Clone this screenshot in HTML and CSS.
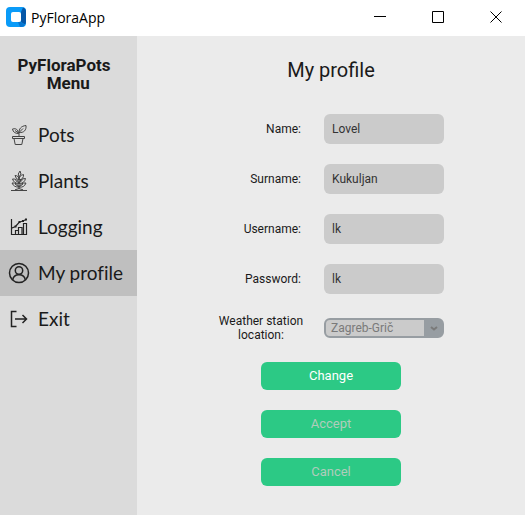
FILE: index.html
```html
<!DOCTYPE html>
<html lang="en">
<head>
<meta charset="utf-8">
<title>PyFloraApp</title>
<link rel="stylesheet" href="styles.css">
</head>
<body>
<header class="titlebar">
  <svg class="logo" width="20" height="20" viewBox="0 0 20 20" aria-hidden="true">
    <rect width="20" height="20" rx="4" fill="#0a9bf8"/>
    <path d="M15 5l2-4.500q3 1 3 4v10q0 2-1 3l-4-2.500z" fill="#0657a8"/>
    <path d="M15 15l4 3q-1 2-4 2h-1l-2-5z" fill="#0876d0"/>
    <rect x="5" y="5" width="10" height="10" rx="2" fill="#fff"/>
  </svg>
  <span class="app-name">PyFloraApp</span>
  <div class="window-controls">
    <button type="button" aria-label="Minimize"><svg width="12" height="12" viewBox="0 0 12 12"><path d="M0 5.500h12"/></svg></button>
    <button type="button" aria-label="Maximize"><svg width="12" height="12" viewBox="0 0 12 12"><path d="M.5.5h11v11H.5z"/></svg></button>
    <button type="button" aria-label="Close"><svg width="12" height="12" viewBox="0 0 12 12"><path d="M.5.5l11 11M11.5.5l-11 11"/></svg></button>
  </div>
</header>
<div class="layout">
  <aside class="sidebar">
    <h2 class="menu-title">PyFloraPots
  Menu</h2>
    <nav class="menu">
      <a class="menu-item" href="#pots">
        <svg class="icon icon-soft" viewBox="0 0 22 22" aria-hidden="true"><path d="M4.500 12.500h12v2h-12zM6 14.500l1.200 6h6.600l1.200-6M11 12.500V8.500M10.500 9.500C7 9.500 5 8 4.500 5 8 4 10 5.500 10.500 9.500zM11 8.500C11 5 13 2 18 1.500 18.500 6 16 9 11 8.500zM11 8.500l4-4M10.500 9L7 6.500"/></svg>
        <span>Pots</span></a>
      <a class="menu-item" href="#plants">
        <svg class="icon icon-soft" viewBox="0 0 22 22" aria-hidden="true"><path d="M3 20.500h16M7 19.800q4-2.500 8 0M11 19V7M11 7q-2-3 1-6 2.500 3-1 6zM11 10Q8 9.500 7 5.500q4 0 4 4.500zM11 10q0-4.500 4.500-5.500.5 4.500-4.500 5.500zM11 13.500q-5 0-6.500-4.500 5-.5 6.500 4.500zM11 13.500q1-5 6.500-5-1 5-6.500 5zM11 17q-5 .5-7-4 5-.5 7 4zM11 17q2-4.500 7-4-2 5-7 4zM11 17l-4-3M11 17l4-3M11 13l-3.500-2.500M11 13l3.500-3"/></svg>
        <span>Plants</span></a>
      <a class="menu-item" href="#logging">
        <svg class="icon" viewBox="0 0 22 22" aria-hidden="true"><path d="M3.500 3v15.500h15V7.500h-3v11M7.500 18.500v-4h3v4M10.500 18.500v-7h3.500v7M4 12l3.500-1.500L11.500 6 15 5l3-1.500"/><path class="dot" d="M6.500 9.500h2v2h-2zM10.500 5h2v2h-2zM14 4h2v2h-2zM17 2.500h2v2h-2z"/></svg>
        <span>Logging</span></a>
      <a class="menu-item active" href="#profile" aria-current="page">
        <svg class="icon icon-bold" viewBox="0 0 22 22" aria-hidden="true"><circle cx="11" cy="11" r="9.500"/><circle cx="11" cy="8.500" r="3.700"/><path d="M4.700 18c.5-3.500 3-5.300 6.300-5.300s5.800 1.800 6.300 5.300"/></svg>
        <span>My profile</span></a>
      <a class="menu-item" href="#exit">
        <svg class="icon icon-bold" viewBox="0 0 22 22" aria-hidden="true"><path d="M8.500 3.500h-5v15h5M7 11h11.500M14.500 7l4 4-4 4"/></svg>
        <span>Exit</span></a>
    </nav>
  </aside>
  <main class="content">
    <h1 class="heading">My profile</h1>
    <form class="profile">
      <div class="fields">
        <label for="name">Name:</label><input id="name" type="text" value="Lovel">
        <label for="surname">Surname:</label><input id="surname" type="text" value="Kukuljan">
        <label for="username">Username:</label><input id="username" type="text" value="lk">
        <label for="password">Password:</label><input id="password" type="text" value="lk">
        <label class="station-label" for="station">Weather station location:</label>
        <div class="select">
          <select id="station" disabled><option>Zagreb-Grič</option></select>
          <svg class="chevron" width="8" height="5" viewBox="0 0 8 5" aria-hidden="true"><path d="M1 1l3 2.500L7 1"/></svg>
        </div>
      </div>
      <div class="actions">
        <button type="button">Change</button>
        <button type="button" disabled>Accept</button>
        <button type="button" disabled>Cancel</button>
      </div>
    </form>
  </main>
</div>
</body>
</html>
```

FILE: styles.css
```css
* {
  box-sizing: border-box;
}

body {
  margin: 0;
  min-height: 100vh;
  display: flex;
  flex-direction: column;
  background: #ebebeb;
  color: #1a1a1a;
  font-family: Roboto, sans-serif;
  font-size: 12px;
}

button, input, select {
  font: inherit;
  border: 0;
}

.titlebar {
  display: flex;
  align-items: center;
  height: 36px;
  padding: 0 0 2px 6px;
  background: #fff;
}

.app-name {
  margin-left: 5px;
  color: #000;
  font-family: "Open Sans", sans-serif;
  font-size: 14px;
}

.window-controls {
  display: flex;
  align-self: stretch;
  margin-left: auto;
}

.window-controls button {
  width: 58px;
  padding: 0;
  background: none;
}

.window-controls svg {
  display: block;
  margin: auto;
  fill: none;
  stroke: #000;
}

.layout {
  display: flex;
  flex: 1;
}

.sidebar {
  width: 137px;
  background: #dbdbdb;
}

.menu-title {
  margin: 0;
  padding: 20px 9px 20px 0;
  font-size: 17px;
  line-height: 18px;
  text-align: center;
  white-space: pre;
}

.menu-item {
  display: flex;
  align-items: center;
  gap: 8px;
  height: 46px;
  padding-left: 8px;
  color: #1a1a1a;
  font-family: Lato, sans-serif;
  font-size: 19px;
  font-variant-ligatures: none;
  text-decoration: none;
}

.menu-item span {
  padding-bottom: 2px;
}

.menu-item.active {
  background: #bfbfbf;
}

.icon {
  width: 22px;
  height: 22px;
  fill: none;
  stroke: #222;
  stroke-width: 1.2;
}

.icon-soft {
  stroke: #444;
  stroke-width: 1;
}

.icon-bold {
  stroke-width: 1.5;
}

.dot {
  fill: #222;
  stroke: none;
}

.content {
  flex: 1;
}

.heading {
  margin: 0;
  padding-top: 22px;
  font-size: 20px;
  font-weight: 400;
  line-height: 24px;
  text-align: center;
}

.profile {
  display: flex;
  flex-direction: column;
  align-items: center;
  gap: 20px;
  padding: 32px 0 28px;
}

.fields {
  display: grid;
  grid-template-columns: 86px 120px;
  column-gap: 20px;
  row-gap: 20px;
  align-items: center;
}

.fields label {
  padding-right: 3px;
  line-height: 14px;
  text-align: right;
}

.fields .station-label {
  padding: 0;
  text-align: center;
}

.fields input {
  width: 100%;
  height: 30px;
  padding: 0 8px;
  border-radius: 6px;
  background: #cbcbcb;
  color: #333;
}

.select {
  position: relative;
}

.select select {
  display: block;
  width: 100%;
  height: 20px;
  padding: 0 5px;
  appearance: none;
  border: 2px solid #979da2;
  border-right-width: 20px;
  border-radius: 6px;
  background: #cbcbcb;
  color: #7a7a7a;
  opacity: 1;
}

.chevron {
  position: absolute;
  top: 8px;
  right: 6px;
  fill: none;
  stroke: #7a7a7a;
  stroke-width: 2;
}

.actions {
  display: flex;
  flex-direction: column;
  gap: 20px;
}

.actions button {
  width: 140px;
  height: 28px;
  padding: 0 0 2px;
  border-radius: 6px;
  background: #2cc985;
  color: #fff;
  font-size: 13px;
}

.actions button:disabled {
  color: #b0ccbc;
}
```
